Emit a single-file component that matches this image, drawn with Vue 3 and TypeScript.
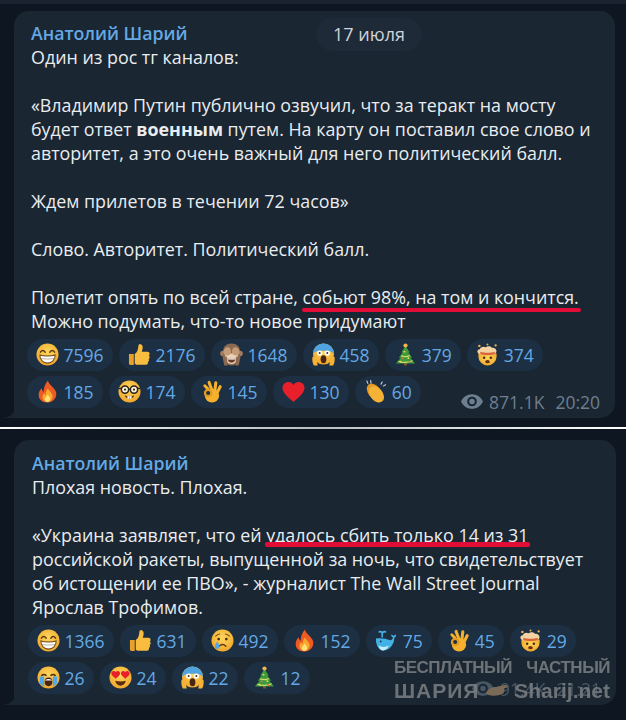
<template>
  <div class="page">
    <svg class="sprites" aria-hidden="true">
      <defs>
        <radialGradient id="face" cx="50%" cy="38%" r="65%">
          <stop offset="0%" stop-color="#ffd65c" />
          <stop offset="100%" stop-color="#eea62a" />
        </radialGradient>
      </defs>
      <symbol id="e-grin" viewBox="0 0 24 24">
        <circle cx="12" cy="12" r="11.5" fill="url(#face)" />
        <path d="M4.600 9.600q2.400-3.400 5 0M14.400 9.600q2.600-3.400 5 0" fill="none" stroke="#5b3a14" stroke-width="1.500" stroke-linecap="round" />
        <path d="M4 12.400c4 1.500 12 1.500 16 0 .2 5.200-3.600 8.600-8 8.600s-8.200-3.400-8-8.600z" fill="#fff" stroke="#6d4515" stroke-width="1.100" />
        <path d="M4.800 16c4 1 10.400 1 14.400 0" fill="none" stroke="#9b8a6c" stroke-width=".7" />
      </symbol>
      <symbol id="e-thumb" viewBox="0 0 24 24">
        <path d="M1 11.500h5V23H3a2 2 0 0 1-2-2z" fill="#e9a028" />
        <path d="M7 11.500c2.500-1.500 3.500-4.500 3.800-8.200.1-1.500 1-2.300 2.200-2.100 1.800.3 2.500 2 2.300 4-.1 1.500-.6 2.700-1 4h6c1.500 0 2.200 1 2.200 2.200 0 .8-.3 1.300-.8 1.700.6.400.9 1 .9 1.700 0 .9-.5 1.500-1.100 1.800.3.400.4.900.4 1.300 0 .9-.6 1.500-1.300 1.800.2.300.3.700.3 1 0 1.200-1 2-2.300 2H10c-1.500 0-2.200-.5-3-1z" fill="#f8bc3e" />
      </symbol>
      <symbol id="e-monkey" viewBox="0 0 24 24">
        <circle cx="3" cy="11" r="2.800" fill="#a67c5f" />
        <circle cx="21" cy="11" r="2.800" fill="#a67c5f" />
        <path d="M12 .5c6.500 0 9 4 9 10 0 7-3 13-9 13s-9-6-9-13c0-6 2.500-10 9-10z" fill="#8a6a52" />
        <path d="M5.500 12c2-1.500 11-1.500 13 0 1 5-2 10-6.500 10S4.500 17 5.500 12z" fill="#ecd2b4" />
        <path d="M3.500 10c0-3 2-5.500 4.500-5.500 2.500 0 3.500 2 3.500 5 0 2-1.500 3.500-3.700 3.500S3.500 12 3.500 10zM20.500 10c0-3-2-5.500-4.500-5.500-2.500 0-3.500 2-3.500 5 0 2 1.500 3.500 3.700 3.500S20.500 12 20.500 10z" fill="#c59b78" />
        <path d="M8 16h8c0 3-1.500 4.500-4 4.500S8 19 8 16z" fill="#6b3c28" />
        <path d="M8.500 16h7v1.300h-7z" fill="#fff" />
        <path d="M2.500 14l2 9.500h3.500l-1-9.500zM21.500 14l-2 9.500H16l1-9.500z" fill="#8a6a52" />
      </symbol>
      <symbol id="e-scream" viewBox="0 0 24 24">
        <circle cx="12" cy="11.500" r="11" fill="url(#face)" />
        <path d="M1 11.500a11 11 0 0 1 22 0c-2-2.500-3.500-3.500-11-3.500S3 9 1 11.500z" fill="#4fa3e0" />
        <circle cx="8" cy="10.500" r="2.800" fill="#fff" />
        <circle cx="16" cy="10.500" r="2.800" fill="#fff" />
        <circle cx="8" cy="10.500" r="1" fill="#3b2a16" />
        <circle cx="16" cy="10.500" r="1" fill="#3b2a16" />
        <ellipse cx="12" cy="17" rx="3" ry="4.200" fill="#4a2412" />
        <path d="M.5 14.500c1.500-1 3.500-.5 4 1l1.500 8H2c-1.500-2.500-2-6-1.500-9zM23.500 14.500c-1.500-1-3.500-.5-4 1l-1.500 8h4c1.500-2.500 2-6 1.500-9z" fill="#f5b236" />
      </symbol>
      <symbol id="e-tree" viewBox="0 0 24 24">
        <rect x="10.400" y="20.500" width="3.200" height="3" fill="#7d5230" />
        <path d="M12 3L7.500 10h1.500L5 15.500h2L2 21.500h20L17 15.500h2L15 10h1.500z" fill="#3f9a3d" />
        <path d="M4.500 19c5 2 10.500 1.500 15-.5M7.500 13.500c3 1 6.500 1 9-.5" fill="none" stroke="#cde06a" stroke-width="1.300" />
        <circle cx="12" cy="2.600" r="2.200" fill="#f3b54a" />
        <circle cx="11" cy="9" r="1" fill="#f2d35a" />
        <circle cx="9" cy="16" r="1" fill="#e96a4b" />
        <circle cx="15" cy="15.800" r="1" fill="#f2d35a" />
        <circle cx="16" cy="19.800" r="1" fill="#e96a4b" />
        <circle cx="7" cy="19.500" r="1" fill="#f2d35a" />
      </symbol>
      <symbol id="e-boom" viewBox="0 0 24 24">
        <path d="M2.500 11h19v3a9.500 9.500 0 0 1-19 0z" fill="url(#face)" />
        <path d="M3.500 11.500C.5 10 1 6.500 4 6.500 4.500 4 8 3 10 4.500c2-1.500 5-1.500 6.500.5 3-.5 6 2 4.500 5-.8 1.500-2.500 2-4 1.500-3 1-7 1-9.500 0-1.200.5-2.500.5-4 0z" fill="#f3d3a2" />
        <path d="M4.500 9c4 1.500 11 1.500 15 0v2.500c-4 1.500-11 1.500-15 0z" fill="#d9623a" />
        <circle cx="3.500" cy="3" r="1.300" fill="#eeb253" />
        <circle cx="20.500" cy="2.500" r="1.200" fill="#eeb253" />
        <circle cx="12" cy="1.500" r="1" fill="#eeb253" />
        <circle cx="8.500" cy="15.500" r="1.300" fill="#4a2c10" />
        <circle cx="15.500" cy="15.500" r="1.300" fill="#4a2c10" />
        <ellipse cx="12" cy="19.500" rx="2.400" ry="1.700" fill="#6b2f14" />
      </symbol>
      <symbol id="e-fire" viewBox="0 0 24 24">
        <path d="M12.500 .5c.6 4 6 7 8 11 2.200 4.800-1 12-8.500 12S1.500 18 3.300 12.500c.5-1.600 1.500-3 2.900-4-.1 1.700.5 3 1.700 3.800C8 8 9.500 4 12.500 .5z" fill="#ee5a24" />
        <path d="M12.500 8.500c.4 2.500 4.500 4.500 4.800 8 .3 3.700-2.500 6.500-5.300 6.500s-5.700-2.500-5.200-6c.2-1.300.9-2.300 1.900-3.100.1 1 .5 1.700 1.200 2.100 0-2.700.8-5.300 2.600-7.500z" fill="#fba92c" />
        <path d="M12.300 15c.5 1.500 2.500 2.500 2.500 4.500s-1.300 3.300-2.800 3.300-2.900-1.300-2.700-3.100c.1-1.900 2-2.800 3-4.700z" fill="#ffe27a" />
      </symbol>
      <symbol id="e-nerd" viewBox="0 0 24 24">
        <circle cx="12" cy="12" r="11.500" fill="url(#face)" />
        <circle cx="7.300" cy="10" r="3.800" fill="#fff4d8" stroke="#2b2118" stroke-width="1.600" />
        <circle cx="16.700" cy="10" r="3.800" fill="#fff4d8" stroke="#2b2118" stroke-width="1.600" />
        <path d="M10.500 9.500h3M.8 9l3-.5M23.200 9l-3-.5" stroke="#2b2118" stroke-width="1.300" />
        <circle cx="7.300" cy="10" r="1.100" fill="#2b2118" />
        <circle cx="16.700" cy="10" r="1.100" fill="#2b2118" />
        <path d="M7 16c3 1.800 7 1.800 10 0-.5 2.200-2.500 3.500-5 3.500S7.500 18.200 7 16z" fill="#5b3013" />
        <path d="M9.800 17h2v2.600h-2zM12.200 17h2v2.600h-2z" fill="#fff" />
      </symbol>
      <symbol id="e-ok" viewBox="0 0 24 24">
        <ellipse cx="12.500" cy="16.500" rx="7.500" ry="7" fill="#f5b12e" />
        <path d="M12.500 11L9.500 2.500M15.500 11l1-8M18 13l3-6" fill="none" stroke="#f5b12e" stroke-width="3.200" stroke-linecap="round" />
        <path d="M8 9L5 6" fill="none" stroke="#f5b12e" stroke-width="3" stroke-linecap="round" />
        <circle cx="8.500" cy="13.500" r="3.300" fill="#1d2f42" stroke="#e39c20" stroke-width="2.400" />
      </symbol>
      <symbol id="e-heart" viewBox="0 0 24 24">
        <path d="M12 23C7 18.500 .5 14 .5 8.200.5 4.400 3.500 2 6.800 2 9 2 11 3.200 12 5.200 13 3.200 15 2 17.200 2c3.300 0 6.300 2.400 6.300 6.200C23.500 14 17 18.500 12 23z" fill="#e8202c" />
      </symbol>
      <symbol id="e-clap" viewBox="0 0 24 24">
        <ellipse cx="11" cy="12.500" rx="6.500" ry="10" transform="rotate(-40 11 12.500)" fill="#e49a22" />
        <ellipse cx="13" cy="15" rx="6.500" ry="9.500" transform="rotate(-40 13 15)" fill="#f6b236" />
        <path d="M3 1l1 2.500M7 .5l.2 2.500M19 2l-1.200 2.300M22.500 5l-2.200 1.200" stroke="#c3ccd2" stroke-width="1.200" stroke-linecap="round" />
      </symbol>
      <symbol id="e-cry" viewBox="0 0 24 24">
        <circle cx="12" cy="12" r="11.500" fill="url(#face)" />
        <circle cx="8" cy="10.500" r="1.400" fill="#4a2c10" />
        <circle cx="16" cy="10.500" r="1.400" fill="#4a2c10" />
        <path d="M5 7.500q2-2 4-2.200M19 7.500q-2-2-4-2.200" fill="none" stroke="#6d4515" stroke-width="1.100" stroke-linecap="round" />
        <path d="M8.500 18q3.500-3.500 7 0" fill="none" stroke="#5b3013" stroke-width="1.400" stroke-linecap="round" />
        <path d="M6.500 13c1.400 2.400 2.500 3.800 2.500 5.300A2.500 2.500 0 0 1 4 18.300c0-1.500 1.100-2.900 2.500-5.300z" fill="#4fa8e8" />
      </symbol>
      <symbol id="e-whale" viewBox="0 0 24 24">
        <path d="M1 10c6-1 11.500.5 14 1.500 2 .8 3.500-.5 3.800-2.800-1.200-.3-2.200-1.500-1.900-3 1 .3 2 .8 2.600 1.500.6-.9 1.500-1.400 2.500-1.500.2 1.600-.6 2.800-1.800 3.400-.2 6.500-4.500 13.400-12.200 13.400C4 22.500.5 16 1 10z" fill="#42b1e6" />
        <path d="M3.500 17c2.500 2 7.500 2.500 11 0-1 3-3.500 5.500-6.500 5.500-2 0-3.500-2.500-4.500-5.500z" fill="#c9ecf9" />
        <path d="M7.500 8c0-2 0-3 .2-4M7.700 4C6.500 2.800 5.500 2.600 4.500 3M7.700 4c1.200-1.200 2.200-1.400 3.200-1" fill="none" stroke="#42b1e6" stroke-width="1.800" stroke-linecap="round" />
        <circle cx="6" cy="13" r="1" fill="#16455e" />
      </symbol>
      <symbol id="e-sob" viewBox="0 0 24 24">
        <circle cx="12" cy="12" r="11.500" fill="url(#face)" />
        <path d="M5 9.800q2.200-2 4.500 0M14.500 9.800q2.300-2 4.500 0" fill="none" stroke="#4a2c10" stroke-width="1.500" stroke-linecap="round" />
        <path d="M3 11h4.500v10.500a11 11 0 0 1-4.500-3.500zM21 11h-4.500v10.500A11 11 0 0 0 21 18z" fill="#4fa8e8" />
        <ellipse cx="12" cy="16.500" rx="4" ry="4.500" fill="#4a2412" />
        <path d="M8.600 14.500q3.400-2 6.800 0v.5H8.600z" fill="#fff" />
      </symbol>
      <symbol id="e-love" viewBox="0 0 24 24">
        <circle cx="12" cy="12" r="11.500" fill="url(#face)" />
        <path d="M7 13.200C4.800 11.200 2.400 9.800 2.400 7.600c0-1.500 1.200-2.500 2.400-2.500 1 0 1.800.5 2.200 1.400.4-.9 1.200-1.400 2.200-1.400 1.200 0 2.400 1 2.400 2.500 0 2.200-2.400 3.600-4.600 5.600zM17 13.200c-2.200-2-4.600-3.400-4.600-5.600 0-1.500 1.200-2.500 2.400-2.500 1 0 1.800.5 2.200 1.400.4-.9 1.200-1.400 2.200-1.400 1.200 0 2.400 1 2.400 2.500 0 2.200-2.400 3.600-4.600 5.600z" fill="#e8202c" />
        <path d="M6.500 15.500c3.500 1 7.500 1 11 0-.4 3-2.800 5-5.500 5s-5.100-2-5.500-5z" fill="#5b2a10" />
      </symbol>
    </svg>

    <div class="top-strip"></div>

    <div class="bubble first">
      <span class="date">17 июля</span>
      <div class="name">Анатолий Шарий</div>
      <div class="text">
        <p>Один из рос тг каналов:</p>
        <p>«Владимир Путин публично озвучил, что за теракт на мосту будет ответ <b>военным</b> путем. На карту он поставил свое слово и авторитет, а это очень важный для него политический балл.</p>
        <p>Ждем прилетов в течении 72 часов»</p>
        <p>Слово. Авторитет. Политический балл.</p>
        <p>Полетит опять по всей стране, <span class="mark">собьют 98%, на том и кончится.</span><br />Можно подумать, что-то новое придумают</p>
      </div>
      <div class="reactions">
        <span v-for="r in firstReactions" :key="r.icon" class="pill">
          <svg class="emoji"><use :href="`#e-${r.icon}`" /></svg>
          <span>{{ r.count }}</span>
        </span>
      </div>
      <div class="meta">
        <svg class="eye" viewBox="0 0 24 16"><path d="M12 0C6.500 0 2.200 3.300 0 8c2.200 4.700 6.500 8 12 8s9.800-3.300 12-8c-2.200-4.700-6.500-8-12-8zm0 13.300A5.300 5.300 0 1 1 12 2.700a5.300 5.300 0 0 1 0 10.600zM12 5a3 3 0 1 0 0 6 3 3 0 0 0 0-6z" fill="currentColor" /></svg>
        <span>871.1K</span>
        <span class="time">20:20</span>
      </div>
    </div>

    <div class="divider"></div>

    <div class="bubble second">
      <div class="name">Анатолий Шарий</div>
      <div class="text">
        <p>Плохая новость. Плохая.</p>
        <p>«Украина заявляет, что ей <span class="mark">удалось сбить только 14 из 31</span> российской ракеты, выпущенной за ночь, что свидетельствует об истощении ее ПВО», - журналист The Wall Street Journal Ярослав Трофимов.</p>
      </div>
      <div class="reactions">
        <span v-for="r in secondReactions" :key="r.icon" class="pill">
          <svg class="emoji"><use :href="`#e-${r.icon}`" /></svg>
          <span>{{ r.count }}</span>
        </span>
      </div>
      <div class="meta faded">
        <svg class="eye" viewBox="0 0 24 16"><path d="M12 0C6.500 0 2.200 3.300 0 8c2.200 4.700 6.500 8 12 8s9.800-3.300 12-8c-2.200-4.700-6.500-8-12-8zm0 13.300A5.300 5.300 0 1 1 12 2.700a5.300 5.300 0 0 1 0 10.600zM12 5a3 3 0 1 0 0 6 3 3 0 0 0 0-6z" fill="currentColor" /></svg>
        <span>91.4K</span>
        <span class="time">21:21</span>
      </div>
      <div class="watermark">
        <div class="wm-top"><span>БЕСПЛАТНЫЙ</span><span>ЧАСТНЫЙ</span></div>
        <div class="wm-bottom">
          <span class="wm-name">ШАРИЯ</span>
          <svg class="wm-hand" viewBox="0 0 24 12"><path d="M1 9c2-4 6-6 10-6l8-2c2-.3 4 .5 4 1.500S21 4 19 4.500c1 1.500.5 4-1.500 5.500-3 1.500-8 2-11 1.500C4 11.200 2 10.500 1 9z" fill="#7a6a58" /></svg>
          <span>Sharij.net</span>
        </div>
      </div>
    </div>
  </div>
</template>

<script setup lang="ts">
interface Reaction {
  icon: string;
  count: number;
}

const firstReactions: Reaction[] = [
  { icon: 'grin', count: 7596 },
  { icon: 'thumb', count: 2176 },
  { icon: 'monkey', count: 1648 },
  { icon: 'scream', count: 458 },
  { icon: 'tree', count: 379 },
  { icon: 'boom', count: 374 },
  { icon: 'fire', count: 185 },
  { icon: 'nerd', count: 174 },
  { icon: 'ok', count: 145 },
  { icon: 'heart', count: 130 },
  { icon: 'clap', count: 60 },
];

const secondReactions: Reaction[] = [
  { icon: 'grin', count: 1366 },
  { icon: 'thumb', count: 631 },
  { icon: 'cry', count: 492 },
  { icon: 'fire', count: 152 },
  { icon: 'whale', count: 75 },
  { icon: 'ok', count: 45 },
  { icon: 'boom', count: 29 },
  { icon: 'sob', count: 26 },
  { icon: 'love', count: 24 },
  { icon: 'scream', count: 22 },
  { icon: 'tree', count: 12 },
];
</script>

<style>
body {
  background: #0e1621;
}
</style>

<style scoped>
.page {
  width: 626px;
  height: 720px;
  overflow: hidden;
  background: #0e1621;
  font-family: "Open Sans", "Noto Sans", sans-serif;
  color: #e9edf0;
}

.sprites {
  position: absolute;
  width: 0;
  height: 0;
}

.top-strip {
  height: 4px;
  background: #18232f;
}

.bubble {
  position: relative;
  box-sizing: border-box;
  margin-left: 14px;
  background: #1a2632;
  border-radius: 15px 15px 15px 0;
}

.bubble::before {
  content: "";
  position: absolute;
  left: -10px;
  bottom: 0;
  width: 10px;
  height: 12px;
  background: radial-gradient(circle at 0 0, transparent 11px, #1a2632 12px);
}

.first {
  margin-top: 7px;
  width: 601px;
  padding: 10px 0 10px 17px;
}

.second {
  margin-top: 11px;
  width: 602px;
  padding: 11px 0 11px 18px;
}

.second .reactions {
  margin-top: 6.500px;
}

.name {
  font-size: 17.700px;
  line-height: 24px;
  font-weight: 600;
  color: #64a9e4;
}

.text {
  font-size: 17.850px;
  line-height: 24px;
  width: 565px;
}

.text p {
  margin: 0 0 24px;
}

.text p:last-child {
  margin-bottom: 0;
}

.text b {
  font-weight: 700;
}

.mark {
  position: relative;
}

.mark::after {
  content: "";
  position: absolute;
  left: -1px;
  right: -2px;
  bottom: -3px;
  height: 4.500px;
  border-radius: 2px;
  background: #e20d36;
}

.second .mark::after {
  bottom: 0;
}

.date {
  position: absolute;
  left: 302px;
  top: 7px;
  height: 33px;
  line-height: 33px;
  padding: 0 17px;
  border-radius: 17px;
  background: #1e2a37;
  color: #ced4da;
  font-size: 18px;
  font-weight: 500;
}

.reactions {
  display: flex;
  flex-wrap: wrap;
  gap: 5.500px 6.500px;
  width: 555px;
  margin: 6px 0 0 -4px;
}

.pill {
  display: inline-flex;
  align-items: center;
  gap: 5px;
  height: 31.500px;
  padding: 0 9px 0 8.500px;
  border-radius: 16px;
  background: #1d2f42;
  color: #64a9e4;
  font-size: 17.500px;
  font-weight: 500;
}

.emoji {
  width: 23px;
  height: 23px;
  flex: none;
}

.meta {
  position: absolute;
  right: 15px;
  bottom: 4px;
  display: flex;
  align-items: center;
  height: 24px;
  color: #6d7f8e;
  font-size: 17.500px;
}

.meta.faded {
  opacity: .55;
}

.eye {
  width: 22px;
  height: 15px;
  margin-right: 6px;
}

.time {
  margin-left: 11px;
}

.divider {
  height: 2px;
  margin-top: 9px;
  background: linear-gradient(90deg, #fff 0%, #b9bcc0 50%, #fff 100%);
}

.watermark {
  position: absolute;
  left: 380px;
  top: 216px;
  width: 216px;
  color: rgba(125, 128, 132, .85);
  font-family: "Liberation Sans", sans-serif;
  font-weight: 700;
  filter: blur(.4px);
}

.wm-top {
  font-size: 17px;
  line-height: 23px;
  letter-spacing: -.5px;
}

.wm-bottom {
  font-size: 21px;
  line-height: 23px;
}

.wm-name {
  letter-spacing: 1px;
}

.wm-top,
.wm-bottom {
  display: flex;
  justify-content: space-between;
  align-items: center;
}

.wm-hand {
  width: 24px;
  height: 12px;
}
</style>
